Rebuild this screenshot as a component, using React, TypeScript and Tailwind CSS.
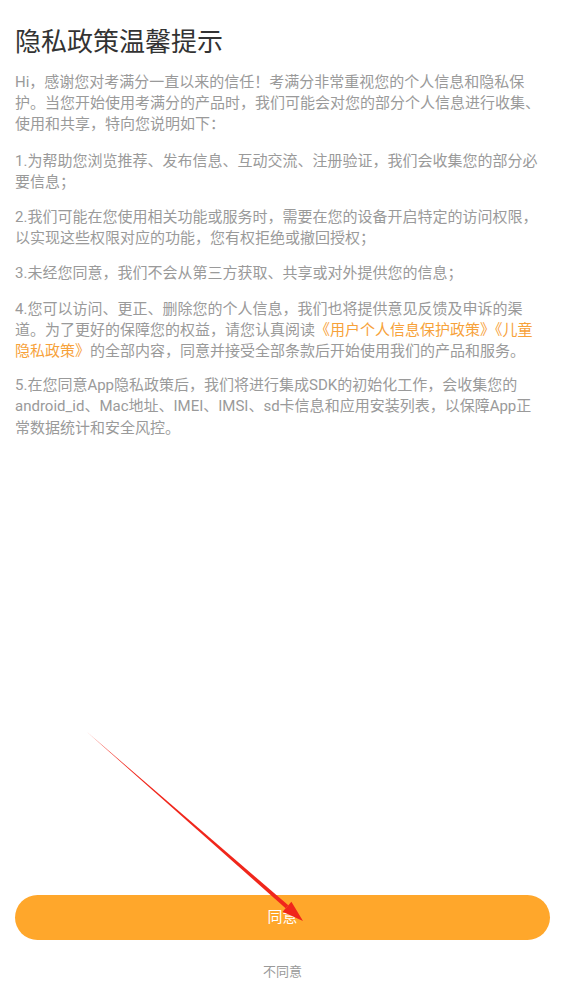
import React from "react";

const font = { fontFamily: 'Roboto, "Noto Sans CJK SC", sans-serif' };

// red annotation arrow drawn over the screen
const Arrow = () => (
  <svg
    className="pointer-events-none absolute left-0 top-0"
    width="565"
    height="1004"
    viewBox="0 0 565 1004"
  >
    <polygon points="87,732 288.3,905.3 285.6,908.3" fill="#f0261b" />
    <polygon points="303,921 282.6,911.8 291.4,901.8" fill="#f0261b" />
  </svg>
);

export default function App() {
  return (
    <div
      className="relative flex h-[1004px] w-[565px] flex-col overflow-hidden bg-white"
      style={font}
    >
      <div className="flex-1 pl-[15px] pr-[19px] pt-[25px]">
        <h1 className="text-[26px] font-normal leading-[34px] text-[#333333]">隐私政策温馨提示</h1>
        <div className="mt-[13px] text-[15px] leading-[21.2px] text-[#9a9a9a]">
          <p>
            Hi，感谢您对考满分一直以来的信任！考满分非常重视您的个人信息和隐私保护。当您开始使用考满分的产品时，我们可能会对您的部分个人信息进行收集、使用和共享，特向您说明如下：
          </p>
          <p className="mt-[15px]">1.为帮助您浏览推荐、发布信息、互动交流、注册验证，我们会收集您的部分必要信息；</p>
          <p className="mt-[14px]">
            2.我们可能在您使用相关功能或服务时，需要在您的设备开启特定的访问权限，以实现这些权限对应的功能，您有权拒绝或撤回授权；
          </p>
          <p className="mt-[14px]">3.未经您同意，我们不会从第三方获取、共享或对外提供您的信息；</p>
          <p className="mt-[14px]">
            4.您可以访问、更正、删除您的个人信息，我们也将提供意见反馈及申诉的渠道。为了更好的保障您的权益，请您认真阅读
            <span className="text-[#f7a23a]">《用户个人信息保护政策》《儿童隐私政策》</span>
            的全部内容，同意并接受全部条款后开始使用我们的产品和服务。
          </p>
          <p className="mt-[13px]">
            5.在您同意App隐私政策后，我们将进行集成SDK的初始化工作，会收集您的android_id、Mac地址、IMEI、IMSI、sd卡信息和应用安装列表，以保障App正常数据统计和安全风控。
          </p>
        </div>
      </div>
      <div className="flex flex-col items-center pb-[23px]">
        <button className="flex h-[45px] w-[535px] items-center justify-center rounded-full bg-[#ffa72b] text-[15px] text-white">
          同意
        </button>
        <button className="mt-[23px] text-[13px] leading-[18px] text-[#9a9a9a]">不同意</button>
      </div>
      <Arrow />
    </div>
  );
}
